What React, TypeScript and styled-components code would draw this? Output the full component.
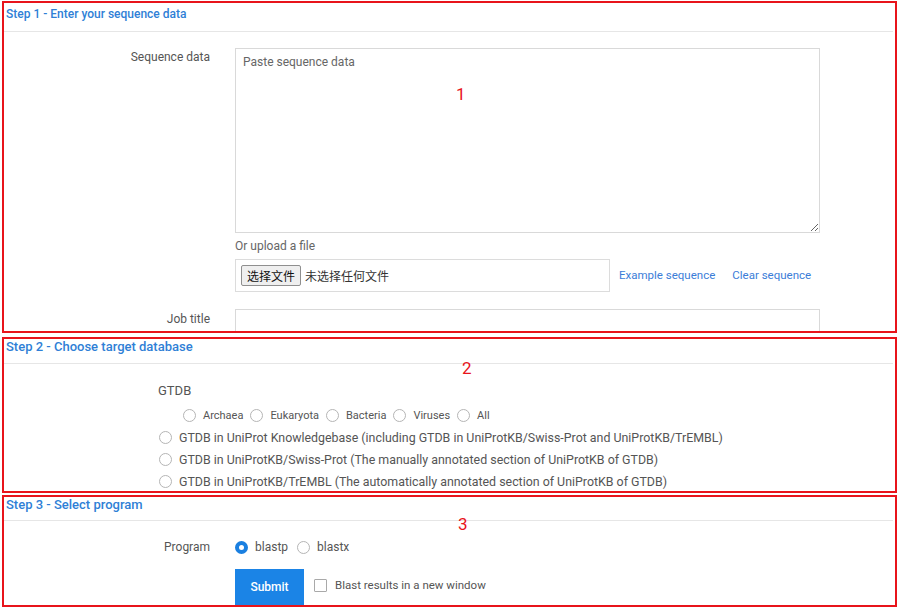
import React, { useState } from "react";
import styled, { createGlobalStyle } from "styled-components";

const GlobalStyle = createGlobalStyle`
  html, body {
    margin: 0;
    padding: 0;
    background: #fff;
  }
  body {
    font-family: Roboto, "Noto Sans CJK SC", "Liberation Sans", sans-serif;
    font-size: 12px;
    color: #555;
    overflow: hidden;
  }
`;

const Page = styled.div`
  width: 900px;
  height: 607px;
  overflow: hidden;
  padding-top: 1px;
  box-sizing: border-box;
`;

const Section = styled.section<{ $h: number; $gap: number }>`
  position: relative;
  margin: ${(p) => p.$gap}px 3px 0 2px;
  height: ${(p) => p.$h}px;
  border: 2px solid #e8141b;
  box-sizing: border-box;
  overflow: hidden;
`;

const Header = styled.div<{ $top: number; $h: number; $size: number }>`
  box-sizing: border-box;
  height: ${(p) => p.$h}px;
  padding: ${(p) => p.$top}px 0 0 2px;
  margin: 0 2px 0 0;
  border-bottom: 1px solid #e6e6e6;
  font-size: ${(p) => p.$size}px;
  line-height: 16px;
  font-weight: 500;
  color: #2f7fd6;
`;

const Marker = styled.span<{ $x: number; $y: number }>`
  position: absolute;
  left: ${(p) => p.$x}px;
  top: ${(p) => p.$y}px;
  font-size: 17px;
  line-height: 18px;
  color: #e8141b;
`;

const FormGrid = styled.div<{ $top: number }>`
  display: grid;
  grid-template-columns: 206px 585px;
  column-gap: 25px;
  padding-top: ${(p) => p.$top}px;
`;

const Label = styled.div<{ $top?: number }>`
  text-align: right;
  line-height: 17px;
  color: #555;
  margin-top: ${(p) => p.$top ?? 0}px;
`;

const Field = styled.div`
  display: flex;
  flex-direction: column;
`;

const SeqArea = styled.textarea`
  width: 585px;
  height: 185px;
  box-sizing: border-box;
  border: 1px solid #d9d9d9;
  padding: 5px 7px;
  font-family: inherit;
  font-size: 12px;
  line-height: 17px;
  color: #555;
  resize: vertical;
  outline: none;
  &::placeholder {
    color: #666;
  }
`;

const SubNote = styled.div`
  margin-top: 5px;
  line-height: 17px;
  color: #666;
`;

const UploadRow = styled.div`
  display: flex;
  align-items: center;
  margin-top: 4px;
`;

const FileBox = styled.div`
  width: 375px;
  height: 33px;
  box-sizing: border-box;
  border: 1px solid #dcdcdc;
  display: flex;
  align-items: center;
  padding-left: 5px;
`;

const FileButton = styled.button`
  height: 21px;
  padding: 0 5px;
  border: 1px solid #8f8f8f;
  border-radius: 2px;
  background: #efefef;
  font-family: "Noto Sans CJK SC", sans-serif;
  font-size: 12px;
  color: #111;
  line-height: 19px;
`;

const FileText = styled.span`
  margin-left: 4px;
  font-family: "Noto Sans CJK SC", sans-serif;
  font-size: 12px;
  color: #333;
`;

const Link = styled.a<{ $ml: number }>`
  margin-left: ${(p) => p.$ml}px;
  color: #3b7dd8;
  text-decoration: none;
  font-size: 11.5px;
  line-height: 17px;
  cursor: pointer;
`;

const TextInput = styled.input`
  width: 585px;
  height: 30px;
  box-sizing: border-box;
  border: 1px solid #d9d9d9;
  outline: none;
  margin-top: 17px;
`;

const DbBlock = styled.div`
  padding: 18px 0 0 154px;
`;

const DbTitle = styled.div`
  font-size: 13px;
  line-height: 18px;
  color: #555;
  margin-bottom: 4px;
`;

const OptionRow = styled.div<{ $indent: number; $size?: number }>`
  display: flex;
  align-items: center;
  height: 22px;
  padding-left: ${(p) => p.$indent}px;
  font-size: ${(p) => p.$size ?? 12}px;
`;

const Option = styled.label<{ $gap: number }>`
  display: flex;
  align-items: center;
  margin-right: ${(p) => p.$gap}px;
  line-height: 17px;
  color: #555;
  cursor: pointer;
`;

const Circle = styled.span<{ $on?: boolean }>`
  width: 13px;
  height: 13px;
  box-sizing: border-box;
  border-radius: 50%;
  border: ${(p) => (p.$on ? "4px solid #1a7fe0" : "1px solid #b5b5b5")};
  background: #fff;
  margin-right: 7px;
  flex: none;
`;

const Box = styled.span`
  width: 13px;
  height: 13px;
  box-sizing: border-box;
  border: 1px solid #a9a9a9;
  border-radius: 1px;
  margin-right: 8px;
  flex: none;
`;

const ProgramGrid = styled.div`
  display: grid;
  grid-template-columns: 206px auto;
  column-gap: 25px;
  row-gap: 11px;
  padding-top: 15px;
  align-items: center;
`;

const SubmitRow = styled.div`
  display: flex;
  align-items: flex-start;
`;

const SubmitButton = styled.button`
  width: 69px;
  height: 38px;
  border: none;
  background: #1b84e6;
  color: #fff;
  font-family: inherit;
  font-size: 12px;
  font-weight: 500;
  padding: 0 0 3px;
  margin-right: 10px;
`;

const CheckOption = styled(Option)`
  margin-top: 8px;
  font-size: 11.5px;
`;

const Radio: React.FC<{ on?: boolean; label: string; gap: number; onPick: () => void }> = ({
  on,
  label,
  gap,
  onPick,
}) => (
  <Option $gap={gap} onClick={onPick}>
    <Circle $on={on} />
    {label}
  </Option>
);

const App: React.FC = () => {
  const [db, setDb] = useState("");
  const [program, setProgram] = useState("blastp");
  const [seq, setSeq] = useState("");

  const groups = ["Archaea", "Eukaryota", "Bacteria", "Viruses", "All"];
  const dbs = [
    "GTDB in UniProt Knowledgebase (including GTDB in UniProtKB/Swiss-Prot and UniProtKB/TrEMBL)",
    "GTDB in UniProtKB/Swiss-Prot (The manually annotated section of UniProtKB of GTDB)",
    "GTDB in UniProtKB/TrEMBL (The automatically annotated section of UniProtKB of GTDB)",
  ];

  return (
    <Page>
      <GlobalStyle />
      <Section $h={332} $gap={0}>
        <Header $top={3} $h={29} $size={12}>
          Step 1 - Enter your sequence data
        </Header>
        <Marker $x={452} $y={82}>1</Marker>
        <FormGrid $top={16}>
          <Label $top={1}>Sequence data</Label>
          <Field>
            <SeqArea
              placeholder="Paste sequence data"
              value={seq}
              onChange={(e) => setSeq(e.target.value)}
            />
            <SubNote>Or upload a file</SubNote>
            <UploadRow>
              <FileBox>
                <FileButton>选择文件</FileButton>
                <FileText>未选择任何文件</FileText>
              </FileBox>
              <Link $ml={9}>Example sequence</Link>
              <Link $ml={17} onClick={() => setSeq("")}>
                Clear sequence
              </Link>
            </UploadRow>
          </Field>
          <Label $top={19}>Job title</Label>
          <TextInput />
        </FormGrid>
      </Section>

      <Section $h={156} $gap={4}>
        <Header $top={0} $h={25} $size={13}>
          Step 2 - Choose target database
        </Header>
        <Marker $x={458} $y={20}>2</Marker>
        <DbBlock>
          <DbTitle>GTDB</DbTitle>
          <OptionRow $indent={25} $size={11}>
            {groups.map((g) => (
              <Radio key={g} label={g} gap={7} on={db === g} onPick={() => setDb(g)} />
            ))}
          </OptionRow>
          {dbs.map((d) => (
            <OptionRow key={d} $indent={1} $size={12.4}>
              <Radio label={d} gap={0} on={db === d} onPick={() => setDb(d)} />
            </OptionRow>
          ))}
        </DbBlock>
      </Section>

      <Section $h={112} $gap={2}>
        <Header $top={0} $h={24} $size={13}>
          Step 3 - Select program
        </Header>
        <Marker $x={454} $y={18}>3</Marker>
        <ProgramGrid>
          <Label>Program</Label>
          <OptionRow $indent={0}>
            <Radio label="blastp" gap={9} on={program === "blastp"} onPick={() => setProgram("blastp")} />
            <Radio label="blastx" gap={0} on={program === "blastx"} onPick={() => setProgram("blastx")} />
          </OptionRow>
          <div />
          <SubmitRow>
            <SubmitButton>Submit</SubmitButton>
            <CheckOption $gap={0}>
              <Box />
              Blast results in a new window
            </CheckOption>
          </SubmitRow>
        </ProgramGrid>
      </Section>
    </Page>
  );
};

export default App;
